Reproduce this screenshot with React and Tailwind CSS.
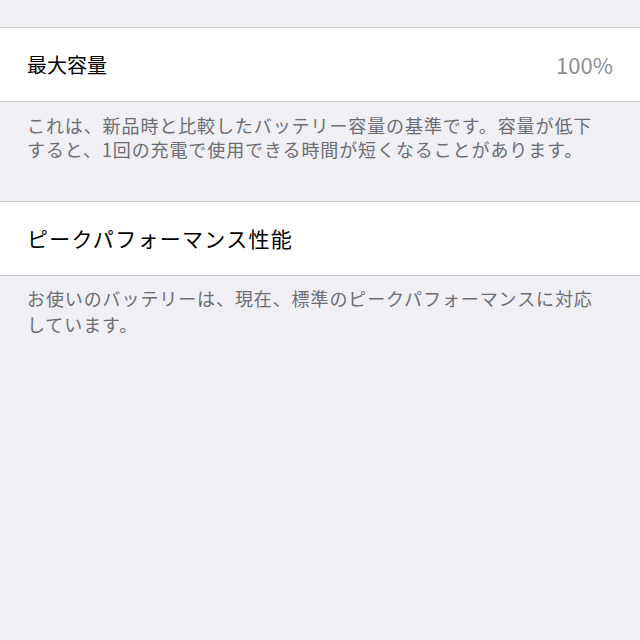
import React from 'react'

const font = { fontFamily: '"Noto Sans CJK JP", "Noto Sans", sans-serif' }

const Row = ({ children }) => (
  <div className="flex items-center justify-between h-[75px] bg-white border-y border-[#c8c7cc] px-[27px]">
    {children}
  </div>
)

const App = () => {
  return (
    <div className="w-[640px] h-[640px] bg-[#efeff4] overflow-hidden" style={font}>
      <div className="h-[27px]" />

      {/* max capacity */}
      <Row>
        <span className="text-[20px] text-black">最大容量</span>
        <span className="text-[22px] text-[#8e8e93]">100%</span>
      </Row>
      <div className="px-[27px] pt-[11px] pb-[40px] text-[18px] leading-[24px] tracking-[0.9px] text-[#6d6d72] whitespace-nowrap">
        これは、新品時と比較したバッテリー容量の基準です。容量が低下
        <br />
        すると、1回の充電で使用できる時間が短くなることがあります。
      </div>

      {/* peak performance */}
      <Row>
        <span className="text-[21px] tracking-[1.3px] text-black">ピークパフォーマンス性能</span>
      </Row>
      <div className="px-[27px] pt-[9px] text-[18px] leading-[26px] tracking-[0.9px] text-[#6d6d72] whitespace-nowrap">
        お使いのバッテリーは、現在、標準のピークパフォーマンスに対応
        <br />
        しています。
      </div>
    </div>
  )
}

export default App
